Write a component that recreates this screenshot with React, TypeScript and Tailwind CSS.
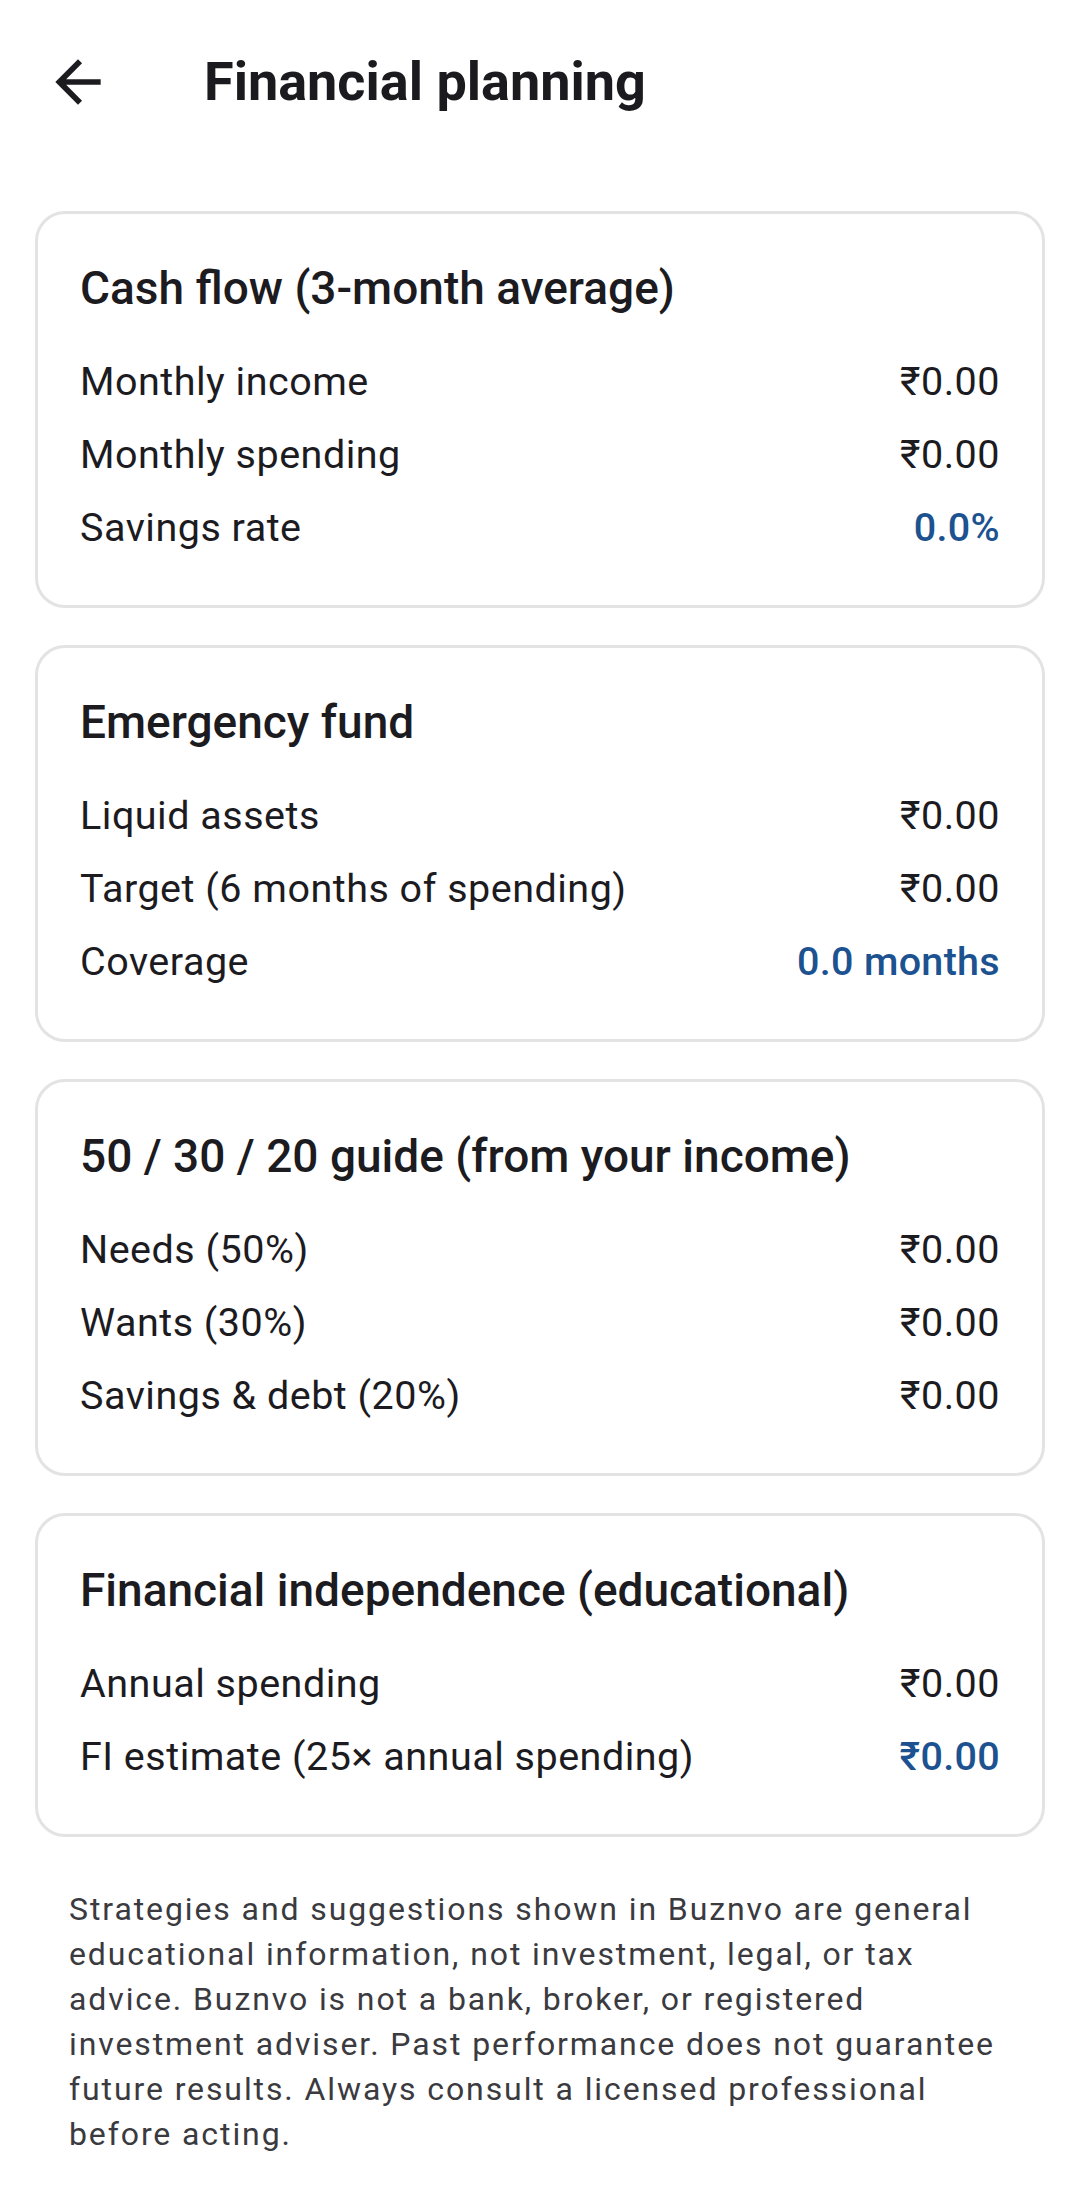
import React from 'react';

type Row = { label: string; value: string; accent?: boolean };

const sections: { title: string; rows: Row[] }[] = [
  {
    title: 'Cash flow (3-month average)',
    rows: [
      { label: 'Monthly income', value: '₹0.00' },
      { label: 'Monthly spending', value: '₹0.00' },
      { label: 'Savings rate', value: '0.0%', accent: true },
    ],
  },
  {
    title: 'Emergency fund',
    rows: [
      { label: 'Liquid assets', value: '₹0.00' },
      { label: 'Target (6 months of spending)', value: '₹0.00' },
      { label: 'Coverage', value: '0.0 months', accent: true },
    ],
  },
  {
    title: '50 / 30 / 20 guide (from your income)',
    rows: [
      { label: 'Needs (50%)', value: '₹0.00' },
      { label: 'Wants (30%)', value: '₹0.00' },
      { label: 'Savings & debt (20%)', value: '₹0.00' },
    ],
  },
  {
    title: 'Financial independence (educational)',
    rows: [
      { label: 'Annual spending', value: '₹0.00' },
      { label: 'FI estimate (25× annual spending)', value: '₹0.00', accent: true },
    ],
  },
];

function BackArrow() {
  return (
    <svg viewBox="0 -960 960 960" className="w-[68px] h-[68px]" fill="#1c1b1f">
      <path d="M313-440l224 224-57 56-320-320 320-320 57 56-224 224h487v80H313Z" />
    </svg>
  );
}

function Card({ title, rows }: { title: string; rows: Row[] }) {
  return (
    <section className="border-[3px] border-[#e3e3e3] rounded-[30px] px-[42px] pt-[46px] pb-[41px] bg-white">
      <h2 className="text-[46px] leading-[56px] font-medium text-[#1c1b1f] mb-[29px]">
        {title}
      </h2>
      <div className="flex flex-col">
        {rows.map((r) => (
          <div key={r.label} className="h-[73px] flex items-center justify-between text-[39.5px] leading-[50px] tracking-[0.5px]">
            <span className="text-[#1c1b1f]">{r.label}</span>
            <span className={r.accent ? 'text-[#1d5290] font-medium tracking-[0.3px]' : 'text-[#1c1b1f]'}>{r.value}</span>
          </div>
        ))}
      </div>
    </section>
  );
}

export default function App() {
  return (
    <main className="min-h-screen bg-white font-['Roboto','Noto_Sans',sans-serif]">
      {/* top bar */}
      <header className="h-[164px] flex items-center pl-[44px]">
        <BackArrow />
        <h1 className="ml-[92px] text-[54px] leading-[68px] font-bold text-[#1b1b1f]">Financial planning</h1>
      </header>

      <div className="px-[35px] pt-[47px] flex flex-col gap-[37px]">
        {sections.map((s) => (
          <Card key={s.title} title={s.title} rows={s.rows} />
        ))}
      </div>

      <p className="px-[69px] mt-[50px] text-[32px] leading-[45px] tracking-[1.9px] text-[#3a3a3f]">
        Strategies and suggestions shown in Buznvo are general educational information, not investment, legal, or tax
        advice. Buznvo is not a bank, broker, or registered investment adviser. Past performance does not guarantee
        future results. Always consult a licensed professional before acting.
      </p>
    </main>
  );
}
